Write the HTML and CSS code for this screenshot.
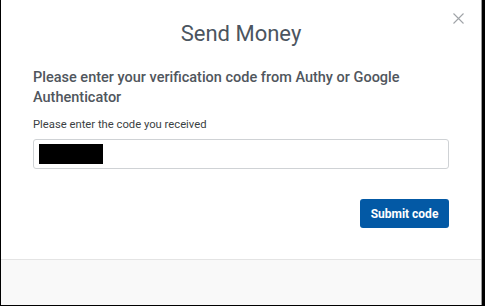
FILE: index.html
```html
<!DOCTYPE html>
<html>
<head>
<meta charset="utf-8">
<link rel="stylesheet" href="styles.css">
</head>
<body>
<div class="frame">
  <div class="modal">
    <div class="modal-body">
      <button class="close" aria-label="Close">
        <svg width="11" height="11" viewBox="0 0 11 11"><path d="M0.5 0.5 L10.5 10.5 M10.5 0.5 L0.5 10.5" stroke="#a0a4a8" stroke-width="1.1" fill="none"/></svg>
      </button>
      <h1 class="title">Send Money</h1>
      <h2 class="heading">Please enter your verification code from Authy or Google Authenticator</h2>
      <label class="label">Please enter the code you received</label>
      <div class="input"><span class="redact"></span></div>
      <div class="actions"><button class="btn">Submit code</button></div>
    </div>
    <div class="modal-footer"></div>
  </div>
</div>
</body>
</html>
```

FILE: styles.css
```css
html, body {
  margin: 0;
  padding: 0;
  background: #000;
}
.frame {
  width: 485px;
  height: 306px;
  box-sizing: border-box;
  border-left: 1px solid #000;
  border-right: 3px solid #000;
  border-bottom: 1px solid #000;
  background: #fff;
  font-family: Roboto, "Liberation Sans", sans-serif;
}
.modal {
  height: 100%;
  display: flex;
  flex-direction: column;
  border-right: 1px solid #9a9a9a;
  box-sizing: border-box;
}
.modal-body {
  position: relative;
  padding: 19px 32px 0 32px;
  height: 259px;
  box-sizing: border-box;
}
.close {
  position: absolute;
  top: 13px;
  right: 17px;
  background: none;
  border: 0;
  padding: 0;
  width: 11px;
  height: 11px;
  display: block;
}
.close svg { display: block; }
.title {
  margin: 0;
  text-align: center;
  font-size: 22px;
  font-weight: 400;
  color: #4b5560;
  line-height: 30px;
}
.heading {
  margin: 19px 0 0 0;
  font-size: 14.5px;
  font-weight: 500;
  color: #50565d;
  line-height: 20px;
}
.label {
  display: block;
  margin-top: 10px;
  font-size: 11.25px;
  color: #3b3f44;
  line-height: 14px;
}
.input {
  margin-top: 7px;
  height: 30px;
  box-sizing: border-box;
  border: 1px solid #cfd2d5;
  border-radius: 3px;
  padding: 4px 5px;
}
.redact {
  display: block;
  width: 64px;
  height: 20px;
  background: #000;
}
.actions {
  display: flex;
  justify-content: flex-end;
  margin-top: 30px;
}
.btn {
  background: #0359a5;
  color: #fff;
  border: 0;
  border-radius: 3px;
  width: 89px;
  height: 29px;
  font-family: Roboto, "Liberation Sans", sans-serif;
  font-weight: 700;
  font-size: 12px;
  padding: 0;
}
.modal-footer {
  flex: 1;
  background: #f9f9f9;
  border-top: 1px solid #e4e4e4;
}
```
